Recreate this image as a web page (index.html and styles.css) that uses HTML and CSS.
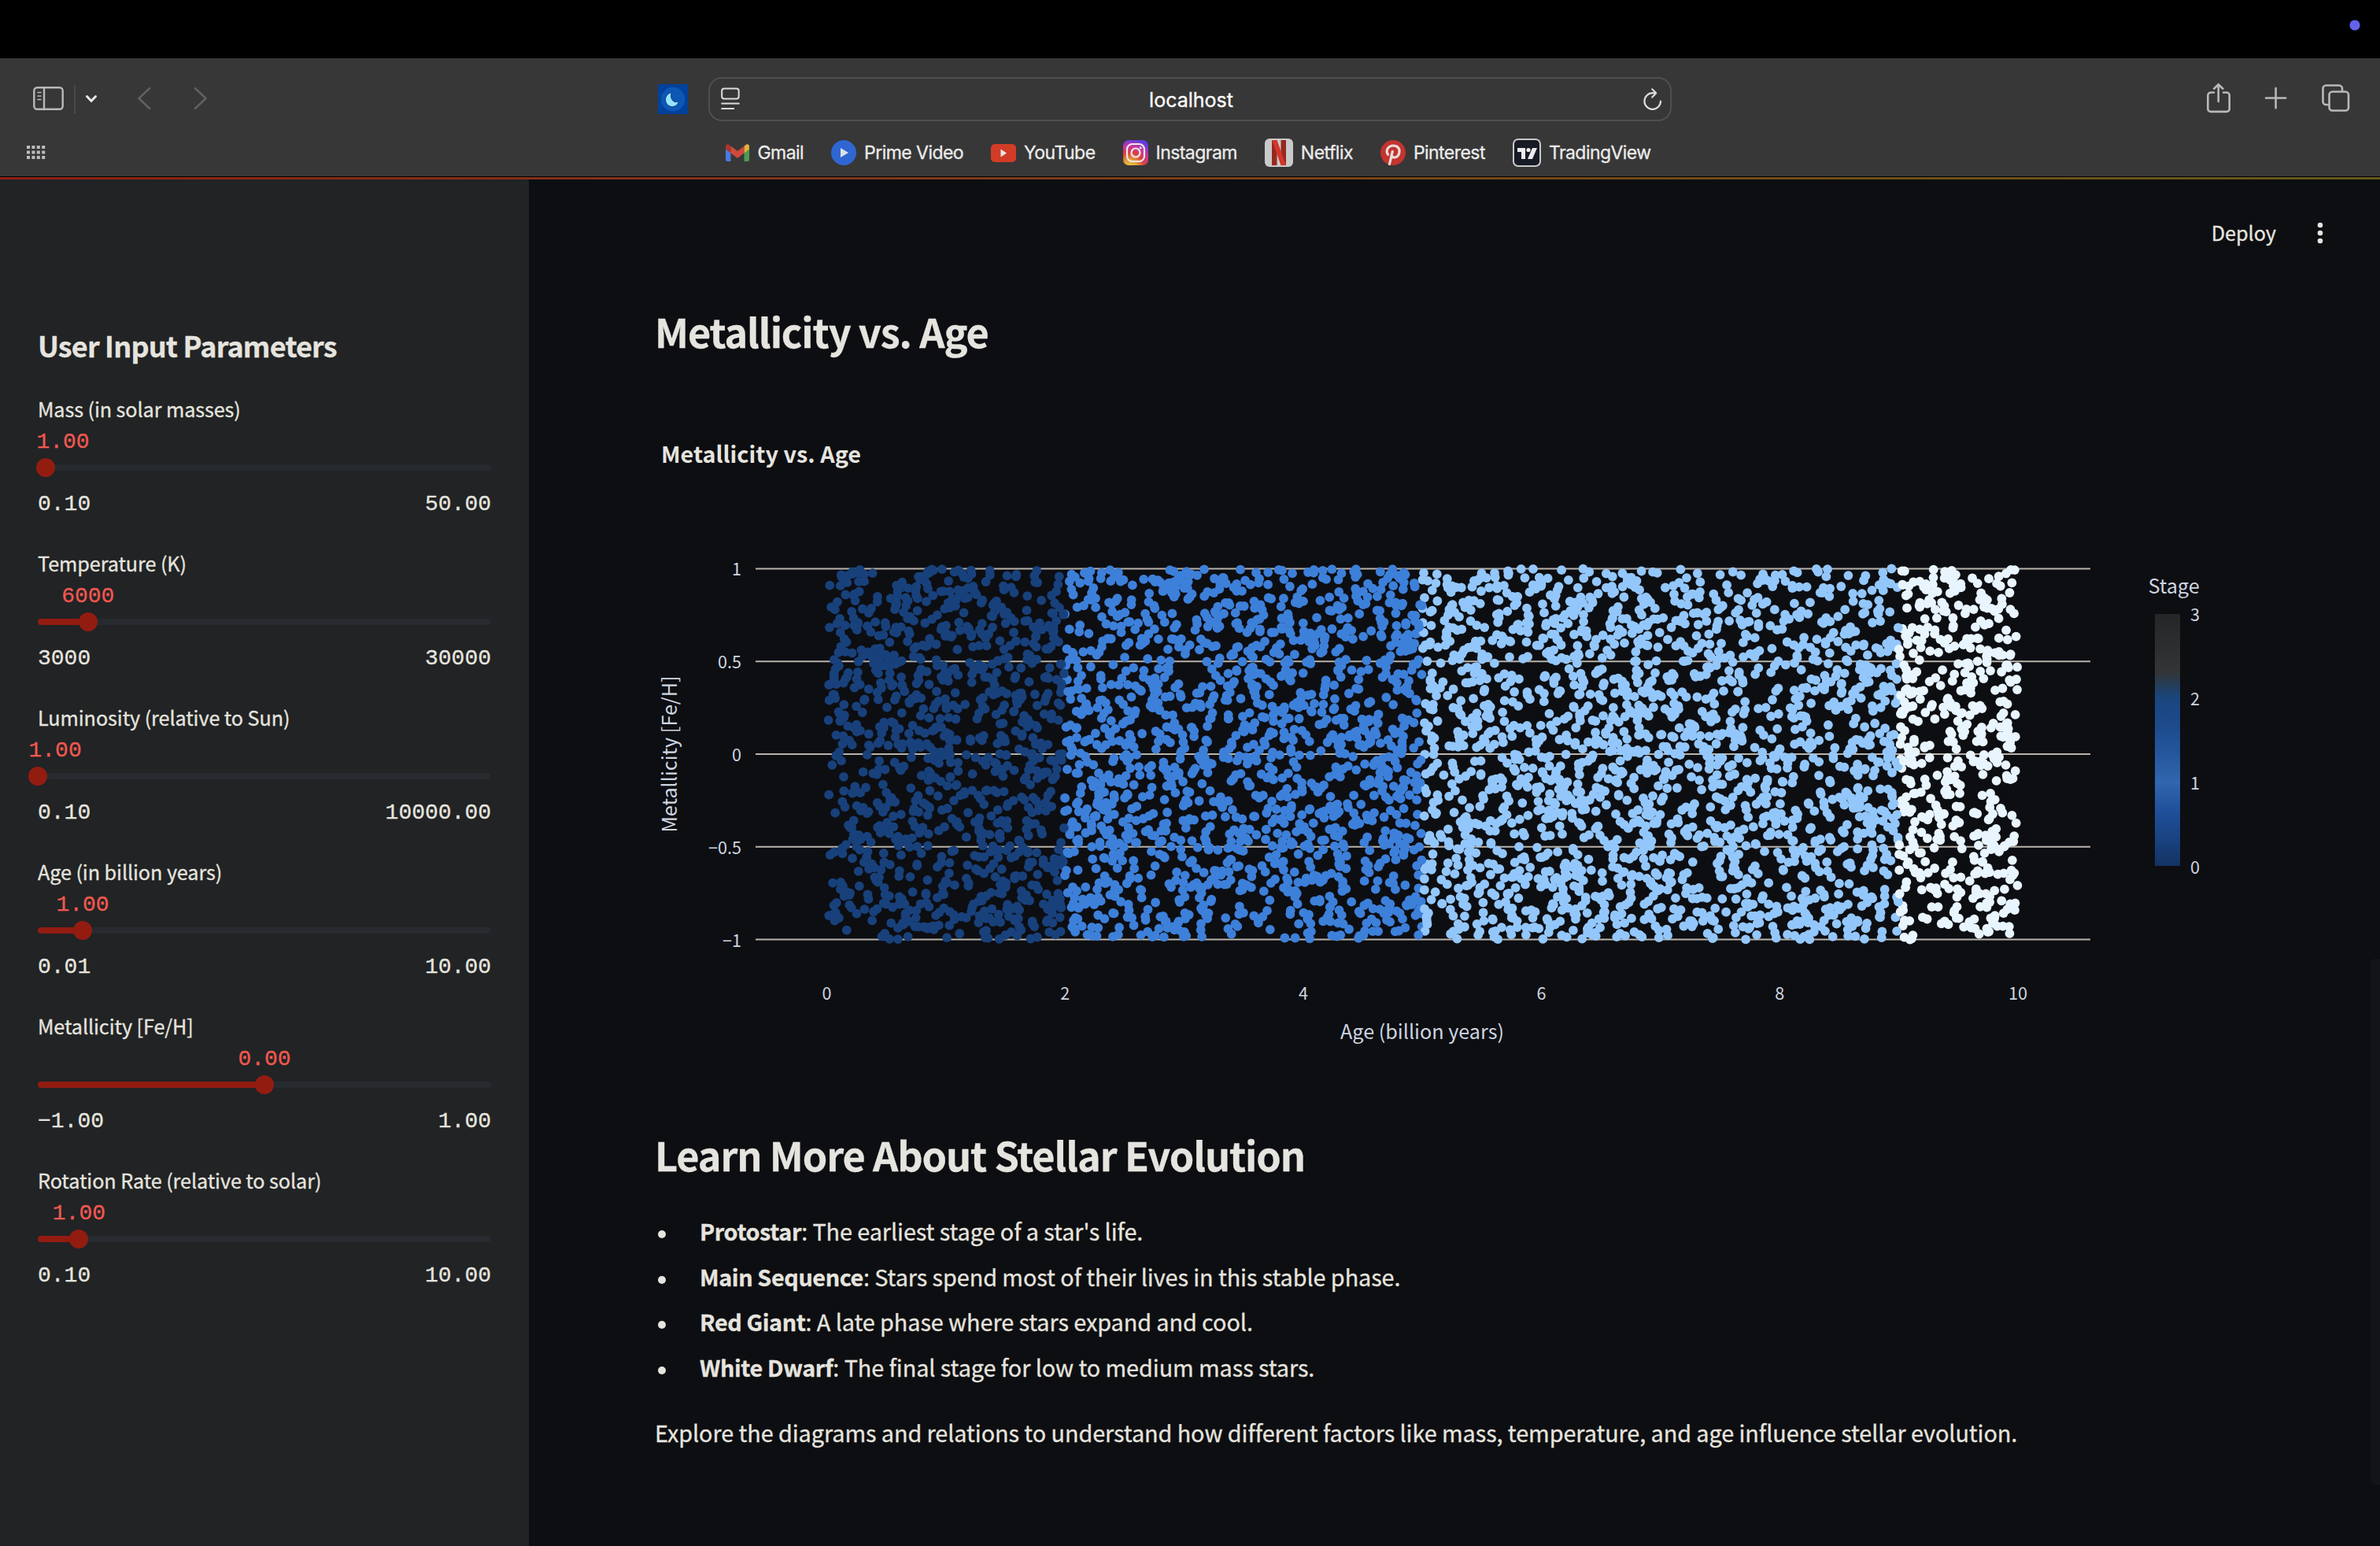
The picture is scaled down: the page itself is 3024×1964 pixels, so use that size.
FILE: index.html
```html
<!DOCTYPE html>
<html lang="en">
<head>
<meta charset="utf-8">
<title>localhost</title>
<link rel="stylesheet" href="styles.css">
</head>
<body>
<div class="menubar"><svg class="status-dot" viewBox="0 0 14 14"><circle cx="7" cy="7" r="6.6" fill="#6562ea"/></svg></div>

<header class="browser">
  <div class="toolbar">
    <svg class="nav-icons" viewBox="0 74 836 104" fill="none" stroke-linecap="round" stroke-linejoin="round">
      <g stroke="#b9b9b9" stroke-width="2.4">
        <rect x="43.3" y="111.2" width="36.4" height="27.6" rx="4"/>
        <path d="M56 111v28"/>
        <path d="M48 117.5h4M48 122h4M48 126.5h4" stroke-width="1.6"/>
      </g>
      <path d="M95 108v36" stroke="#4b4b4b" stroke-width="2" stroke-linecap="butt"/>
      <path d="M110.5 122.5l5.5 5.8 5.5-5.8" stroke="#e8e8e8" stroke-width="3"/>
      <path d="M190 112.200l-13.500 12.800 13.500 12.800M248 112.200l13.500 12.800-13.500 12.800" stroke="#616161" stroke-width="2.6"/>
    </svg>
    <svg class="ext-icon" viewBox="0 0 38 38">
      <rect width="38" height="38" fill="#00419c"/>
      <circle cx="19" cy="19" r="15.300" fill="#0c57b4"/>
      <path d="M17 10.500c-4 1-7.500 4.500-7.500 9 0 5 3.800 9 8.800 9 4.200 0 7.300-3.200 8-7-2.200 1.500-5 1.500-7-.2-2.400-2-3.100-4.800-2.300-10.800z" fill="#98e4ff" stroke="#083b86" stroke-width="1"/>
    </svg>
    <div class="address">
      <svg class="reader" viewBox="0 0 24 30" fill="none" stroke="#dcdcdc" stroke-width="2" stroke-linecap="round">
        <rect x="1.200" y="1.500" width="21.500" height="13" rx="3"/><path d="M1.200 20.500h21.600M1.200 27h15"/>
      </svg>
      <span class="url">localhost</span>
      <svg class="reload" viewBox="0 0 26 30" fill="none" stroke="#dcdcdc" stroke-width="2.200" stroke-linecap="round" stroke-linejoin="round">
        <path d="M23 17.500A10.300 10.300 0 1 1 12.700 7.200H16"/><path d="M12.200 2.300l5 5-5 5.200"/>
      </svg>
    </div>
    <svg class="page-icons" viewBox="2124 74 900 104" fill="none" stroke="#b9b9b9" stroke-width="2.600" stroke-linecap="round" stroke-linejoin="round">
      <path d="M2813 117.500h-4a3.700 3.700 0 0 0-3.700 3.700v17a3.700 3.700 0 0 0 3.700 3.700h20a3.700 3.700 0 0 0 3.700-3.700v-17a3.700 3.700 0 0 0-3.700-3.700h-4M2818.700 129v-21.500M2813 112.700l5.700-5.500 5.700 5.500"/>
      <path d="M2879 124.500h25.200M2891.600 112v25.200"/>
      <rect x="2959.500" y="116.500" width="24.500" height="24" rx="4"/>
      <path d="M2958 133h-2.500a4 4 0 0 1-4-4v-16.500a4 4 0 0 1 4-4h16.500a4 4 0 0 1 4 4v2.500"/>
    </svg>
  </div>
  <div class="favorites">
    <svg class="apps" viewBox="0 0 24 18" fill="#bdbdbd">
      <path d="M0 0h4v4H0zM6.400 0h4v4h-4zM12.800 0h4v4h-4zM19.200 0h4v4h-4zM0 6.500h4v4H0zM6.400 6.500h4v4h-4zM12.800 6.500h4v4h-4zM19.200 6.500h4v4h-4zM0 13h4v4H0zM6.400 13h4v4h-4zM12.800 13h4v4h-4zM19.200 13h4v4h-4z"/>
    </svg>
    <nav class="links">
      <a class="link"><svg width="30" height="22" viewBox="0 0 30 22"><path d="M0 4v16a2 2 0 0 0 2 2h4.500V9z" fill="#4a7be0"/><path d="M30 4v16a2 2 0 0 1-2 2h-4.500V9z" fill="#4c9b54"/><path d="M23.500 2.500L26 .7C28 -.6 30 .8 30 3v3.500l-6.500 5z" fill="#e0b23c"/><path d="M6.500 2.500L4 .7C2-.6 0 .8 0 3v3.500l6.500 5z" fill="#a93429"/><path d="M6.500 2.500L15 9l8.500-6.500v9L15 18l-8.500-6.500z" fill="#cf4a3c"/></svg><span>Gmail</span></a>
      <a class="link"><svg width="32" height="32" viewBox="0 0 32 32"><circle cx="16" cy="16" r="16" fill="#2f66d2"/><path d="M12 10v12l10-6z" fill="#dcdfe6"/></svg><span>Prime Video</span></a>
      <a class="link"><svg width="32" height="23" viewBox="0 0 32 23"><rect width="32" height="23" rx="5" fill="#d23c26"/><path d="M12.500 6.500v10l7.500-5z" fill="#e8e8e8"/></svg><span>YouTube</span></a>
      <a class="link"><svg width="32" height="32" viewBox="0 0 32 32"><defs><radialGradient id="ig" cx=".28" cy="1.050" r="1.100"><stop offset="0" stop-color="#e6c840"/><stop offset=".25" stop-color="#e2a03a"/><stop offset=".5" stop-color="#d8403f"/><stop offset=".75" stop-color="#c237a8"/><stop offset="1" stop-color="#5a3de0"/></radialGradient></defs><rect width="32" height="32" rx="7" fill="url(#ig)"/><g fill="none" stroke="#f2e6ea" stroke-width="2.200"><rect x="5" y="5" width="22" height="22" rx="6.500"/><circle cx="16" cy="16" r="5.500"/></g><circle cx="22.200" cy="9.800" r="1.500" fill="#f2e6ea"/></svg><span>Instagram</span></a>
      <a class="link"><svg width="36" height="36" viewBox="0 0 36 36"><rect width="36" height="36" rx="6" fill="#cacaca"/><path d="M9 2h6.500v32L9 34zM20.500 2H27v32h-6.500z" fill="#96281f"/><path d="M9 2h6.500L27 34h-6.500z" fill="#d2372a"/></svg><span>Netflix</span></a>
      <a class="link"><svg width="32" height="32" viewBox="0 0 32 32"><circle cx="16" cy="16" r="16" fill="#c3342f"/><path d="M11.500 30.500l3.800-16M9.600 18.300c-3.600-5 .2-11.300 6.800-11.300 5.200 0 8.200 3.500 7.600 8-.5 4.400-3.200 7.200-6.400 7-1.800-.1-3.200-1.200-3.400-2.600" fill="none" stroke="#eadedd" stroke-width="3.200" stroke-linecap="round"/></svg><span>Pinterest</span></a>
      <a class="link"><svg width="36" height="36" viewBox="0 0 36 36"><rect x="1" y="1" width="34" height="34" rx="6" fill="#171b26" stroke="#c8c8c8" stroke-width="2"/><path d="M6 12h10v14h-5v-9H6zM25 12h6l-6 14h-6z" fill="#ececec"/><circle cx="20" cy="14.500" r="2.600" fill="#ececec"/></svg><span>TradingView</span></a>
    </nav>
  </div>
</header>
<div class="decoration"></div>

<div class="app">
  <aside class="sidebar">
    <h2>User Input Parameters</h2>
    <div class="slider"><label>Mass (in solar masses)</label><output style="margin-left:-1.600px">1.00</output><div class="track"><i class="fill" style="width:1.800%"></i><i class="thumb" style="left:1.800%"></i></div><div class="range"><span>0.10</span><span>50.00</span></div></div>
    <div class="slider"><label>Temperature (K)</label><output style="margin-left:30.200px">6000</output><div class="track"><i class="fill" style="width:11.110%"></i><i class="thumb" style="left:11.110%"></i></div><div class="range"><span>3000</span><span>30000</span></div></div>
    <div class="slider"><label>Luminosity (relative to Sun)</label><output style="margin-left:-11.500px">1.00</output><div class="track"><i class="fill" style="width:0.010%"></i><i class="thumb" style="left:0.010%"></i></div><div class="range"><span>0.10</span><span>10000.00</span></div></div>
    <div class="slider"><label>Age (in billion years)</label><output style="margin-left:23.400px">1.00</output><div class="track"><i class="fill" style="width:9.910%"></i><i class="thumb" style="left:9.910%"></i></div><div class="range"><span>0.01</span><span>10.00</span></div></div>
    <div class="slider"><label>Metallicity [Fe/H]</label><output style="margin-left:254.400px">0.00</output><div class="track"><i class="fill" style="width:50%"></i><i class="thumb" style="left:50%"></i></div><div class="range"><span>−1.00</span><span>1.00</span></div></div>
    <div class="slider"><label>Rotation Rate (relative to solar)</label><output style="margin-left:18.800px">1.00</output><div class="track"><i class="fill" style="width:9.090%"></i><i class="thumb" style="left:9.090%"></i></div><div class="range"><span>0.10</span><span>10.00</span></div></div>
  </aside>

  <main class="main">
    <div class="actions"><span>Deploy</span><svg class="more" viewBox="0 0 8 28" fill="#e6e4df"><circle cx="4" cy="4" r="3.300"/><circle cx="4" cy="14" r="3.300"/><circle cx="4" cy="24" r="3.300"/></svg></div>
    <h1>Metallicity vs. Age</h1>
    <svg class="chart" viewBox="832 480 2032 900">
      <defs><linearGradient id="stage" x1="0" y1="1" x2="0" y2="0">
        <stop offset="0" stop-color="#133364"/><stop offset=".11" stop-color="#194381"/><stop offset=".22" stop-color="#20509b"/><stop offset=".333" stop-color="#3067ae"/><stop offset=".44" stop-color="#25579e"/><stop offset=".55" stop-color="#1d4b8d"/><stop offset=".667" stop-color="#19467d"/><stop offset=".77" stop-color="#333536"/><stop offset=".88" stop-color="#2c2d2e"/><stop offset="1" stop-color="#252627"/>
      </linearGradient></defs>
      <text class="chart-title" x="840" y="588">Metallicity vs. Age</text>
      <path class="grid" d="M960 722.500H2656M960 840.300H2656M960 958H2656M960 1075.800H2656M960 1193.600H2656"/>
      <g id="points"></g>
      <g class="tick end"><text x="942" y="731">1</text><text x="942" y="849">0.5</text><text x="942" y="967">0</text><text x="942" y="1084.500">−0.5</text><text x="942" y="1202.500">−1</text></g>
      <g class="tick mid"><text x="1050.500" y="1269.500">0</text><text x="1353.200" y="1269.500">2</text><text x="1655.900" y="1269.500">4</text><text x="1958.600" y="1269.500">6</text><text x="2261.300" y="1269.500">8</text><text x="2564" y="1269.500">10</text></g>
      <text class="axis" x="1807" y="1320">Age (billion years)</text>
      <text class="axis" transform="translate(860 958) rotate(-90)">Metallicity [Fe/H]</text>
      <text class="axis" x="2762" y="754">Stage</text>
      <rect x="2738" y="780" width="32" height="320" fill="url(#stage)"/>
      <g class="tick"><text x="2783" y="789">3</text><text x="2783" y="895.500">2</text><text x="2783" y="1002.500">1</text><text x="2783" y="1109.500">0</text></g>
    </svg>
    <h1 class="learn">Learn More About Stellar Evolution</h1>
    <ul>
      <li><b>Protostar</b>: The earliest stage of a star's life.</li>
      <li><b>Main Sequence</b>: Stars spend most of their lives in this stable phase.</li>
      <li><b>Red Giant</b>: A late phase where stars expand and cool.</li>
      <li><b>White Dwarf</b>: The final stage for low to medium mass stars.</li>
    </ul>
    <p>Explore the diagrams and relations to understand how different factors like mass, temperature, and age influence stellar evolution.</p>
    <div class="scrollbar"></div>
  </main>
</div>
<script src="chart.js"></script>
</body>
</html>
```
FILE: styles.css
```css
* { box-sizing: border-box; margin: 0; padding: 0; }

body {
  width: 3024px;
  height: 1964px;
  overflow: hidden;
  display: flex;
  flex-direction: column;
  background: #0d0e12;
  color: #e6e4df;
  font-family: "Noto Sans CJK JP", "Open Sans", sans-serif;
}

svg { display: block; flex: none; }

/* Browser window */
.menubar {
  height: 74px;
  background: #000;
  display: flex;
  justify-content: flex-end;
  padding: 25px 25px 0 0;
}
.status-dot { width: 14px; height: 14px; }

.browser {
  height: 151px;
  background: #373737;
  border-bottom: 1px solid #000;
  font-family: Inter, "Liberation Sans", sans-serif;
}
.toolbar {
  display: grid;
  grid-template-columns: 836px 38px 26px 1224px 900px;
  height: 104px;
  align-items: center;
}
.nav-icons { width: 836px; height: 104px; }
.page-icons { width: 900px; height: 104px; }
.ext-icon { width: 38px; height: 38px; }
.address {
  grid-column: 4;
  display: flex;
  align-items: center;
  justify-content: space-between;
  height: 56px;
  padding: 0 9px 0 14px;
  border: 2px solid #4f4f4f;
  border-radius: 17px;
}
.reader { width: 24px; height: 30px; }
.reload { width: 26px; height: 30px; }
.url {
  padding-top: 1px;
  font-size: 25px;
  line-height: 30px;
  color: #fff;
  -webkit-text-stroke: 0.3px currentColor;
}

.favorites {
  display: grid;
  grid-template-columns: 34px 1fr 34px;
  height: 32px;
  align-items: center;
}
.apps { grid-column: 2; grid-row: 1; width: 24px; height: 18px; }
.links {
  grid-column: 2;
  grid-row: 1;
  display: flex;
  justify-content: center;
  align-items: center;
  gap: 35px;
  padding-right: 4px;
  font-size: 23px;
  letter-spacing: -0.55px;
  line-height: 32px;
  color: #ebebeb;
  -webkit-text-stroke: 0.3px currentColor;
}
.link { display: flex; align-items: center; gap: 10px; height: 32px; }

.decoration {
  height: 3px;
  background: linear-gradient(90deg, #8f2012, #82361a 35%, #784616 60%, #655a1a);
}

/* Application */
.app { display: flex; flex: 1; -webkit-text-stroke: 0.3px currentColor; }

.sidebar {
  width: 672px;
  padding: 186px 48px 0;
  background: #212325;
}
.sidebar h2 {
  font-size: 36px;
  letter-spacing: -0.83px;
  line-height: 48px;
  margin-bottom: 37px;
  white-space: nowrap;
}
.slider { display: flex; flex-direction: column; height: 196px; }
.slider label { font-size: 25.2px; letter-spacing: -0.08px; line-height: 40px; }
.slider output,
.range {
  font-family: "Liberation Mono", monospace;
  font-size: 28px;
  line-height: 46px;
}
.slider output { color: #f05850; }
.track {
  position: relative;
  height: 8px;
  margin: 5px 0 20px;
  border-radius: 4px;
  background: #272a2e;
}
.fill {
  display: block;
  height: 8px;
  border-radius: 4px;
  background: #931c11;
}
.thumb {
  position: absolute;
  top: -8px;
  width: 24px;
  height: 24px;
  margin-left: -12px;
  border-radius: 50%;
  background: #931c11;
}
.range { display: flex; justify-content: space-between; }

.main {
  position: relative;
  flex: 1;
  padding: 47px 72px 0 160px;
}
.actions {
  display: flex;
  justify-content: flex-end;
  align-items: center;
  gap: 52px;
  height: 40px;
  font-size: 25.2px;
}
.more { width: 8px; height: 28px; margin-top: 2px; }
h1 { font-size: 50.4px; letter-spacing: -1.1px; line-height: 68px; margin-top: 72px; }
.chart { width: 2032px; height: 900px; margin-top: 25px; }
h1.learn { margin-top: 53px; }

ul { margin-top: 34px; list-style: none; }
li, p {
  font-size: 28.8px;
  letter-spacing: -0.07px;
  line-height: 57.6px;
  white-space: nowrap;
}
li { display: block; padding-left: 57px; position: relative; }
li b { letter-spacing: -0.4px; }
li::before {
  content: "";
  position: absolute;
  left: 4px;
  top: 28px;
  width: 10px;
  height: 10px;
  border-radius: 50%;
  background: #e6e4df;
}
p { margin-top: 26px; }

.scrollbar {
  position: absolute;
  right: 0;
  top: 990px;
  width: 12px;
  height: 668px;
  border-radius: 6px 0 0 6px;
  background: #131418;
}

/* Chart */
.chart-title { font-size: 28.8px; font-weight: 700; fill: #e6e4df; }
.grid { stroke: #b9b4ab; stroke-width: 2; fill: none; }
.tick, .axis { fill: #cdd5e0; -webkit-text-stroke: 0.3px #cdd5e0; }
.tick { font-size: 21.6px; }
.end { text-anchor: end; }
.mid { text-anchor: middle; }
.axis { font-size: 25.2px; text-anchor: middle; }
```
FILE: chart.js
```js
// Scatter of metallicity against age, coloured by evolutionary stage.
const stages = [
  { until: 2, color: "#18417c" },
  { until: 5, color: "#3d80da" },
  { until: 9, color: "#93c7fb" },
  { until: 10, color: "#e8f5ff" }
];

let seed = 42;
function random() {
  seed = (seed + 0x6d2b79f5) | 0;
  let t = Math.imul(seed ^ (seed >>> 15), 1 | seed);
  t = (t + Math.imul(t ^ (t >>> 7), 61 | t)) ^ t;
  return ((t ^ (t >>> 14)) >>> 0) / 4294967296;
}

let circles = "";
for (let i = 0; i < 5000; i++) {
  const age = 0.01 + random() * 9.99;
  const metallicity = random() * 2 - 1;
  const color = stages.find(s => age <= s.until).color;
  const x = (1050 + age * 151.35).toFixed(1);
  const y = (958 - metallicity * 235.5).toFixed(1);
  circles += `<circle cx="${x}" cy="${y}" r="5.9" fill="${color}" stroke="none"/>`;
}
document.getElementById("points").innerHTML = circles;
```
